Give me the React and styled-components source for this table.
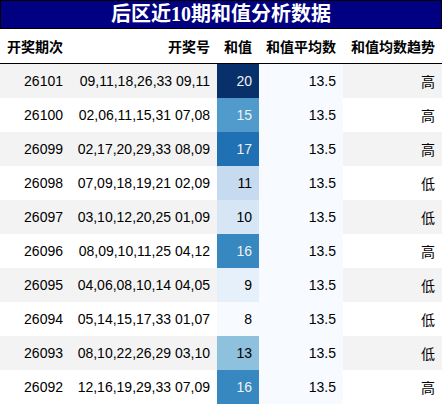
import styled, { createGlobalStyle } from "styled-components";

const rows = [
  ["26101", "09,11,18,26,33 09,11", 20, "高"],
  ["26100", "02,06,11,15,31 07,08", 15, "高"],
  ["26099", "02,17,20,29,33 08,09", 17, "高"],
  ["26098", "07,09,18,19,21 02,09", 11, "低"],
  ["26097", "03,10,12,20,25 01,09", 10, "低"],
  ["26096", "08,09,10,11,25 04,12", 16, "高"],
  ["26095", "04,06,08,10,14 04,05", 9, "低"],
  ["26094", "05,14,15,17,33 01,07", 8, "低"],
  ["26093", "08,10,22,26,29 03,10", 13, "低"],
  ["26092", "12,16,19,29,33 07,09", 16, "高"],
];

// Blues gradient, 8..20
const blues = {
  8: ["#f7fbff", "#000"],
  9: ["#e6f0fa", "#000"],
  10: ["#d6e6f4", "#000"],
  11: ["#c6dbef", "#000"],
  13: ["#8dc1dd", "#000"],
  15: ["#509bcb", "#f1f1f1"],
  16: ["#3787c0", "#f1f1f1"],
  17: ["#2070b4", "#f1f1f1"],
  20: ["#08306b", "#f1f1f1"],
};

export default function App() {
  return (
    <>
      <GlobalStyle />
      <Title>后区近10期和值分析数据</Title>
      <Table>
        <colgroup>
          <col style={{ width: 70 }} />
          <col style={{ width: 147 }} />
          <col style={{ width: 42 }} />
          <col style={{ width: 84 }} />
          <col style={{ width: 99 }} />
        </colgroup>
        <thead>
          <tr>
            <Th $left>开奖期次</Th>
            <Th>开奖号</Th>
            <Th>和值</Th>
            <Th>和值平均数</Th>
            <Th>和值均数趋势</Th>
          </tr>
        </thead>
        <tbody>
          {rows.map(([period, nums, sum, trend]) => (
            <Row key={period}>
              <Td>{period}</Td>
              <Td>{nums}</Td>
              <SumCell $bg={blues[sum][0]} $fg={blues[sum][1]}>
                {sum}
              </SumCell>
              <SumCell $bg="#f7fbff" $fg="#000">
                13.5
              </SumCell>
              <Td>{trend}</Td>
            </Row>
          ))}
        </tbody>
      </Table>
    </>
  );
}

const GlobalStyle = createGlobalStyle`
  body {
    margin: 0;
    background: #fff;
  }
`;

const Title = styled.div`
  box-sizing: border-box;
  width: 442px;
  height: 29px;
  line-height: 27px;
  background: #000080;
  color: #fff;
  border: 1px solid #000;
  font-family: "Liberation Serif", "Noto Sans CJK SC", serif;
  font-weight: bold;
  font-size: 20px;
  text-align: center;
`;

const Table = styled.table`
  width: 442px;
  table-layout: fixed;
  border-collapse: separate;
  border-spacing: 0;
  font-family: "Liberation Sans", "Noto Sans CJK SC", sans-serif;
  font-size: 14px;
  color: #000;
`;

const Th = styled.th`
  box-sizing: border-box;
  height: 35px;
  padding: 0 7px;
  text-align: ${(p) => (p.$left ? "left" : "right")};
  font-weight: bold;
  white-space: nowrap;
  border-bottom: 1px solid #000;
`;

const Row = styled.tr`
  background: #fff;

  &:nth-child(odd) {
    background: #f3f3f3;
  }
`;

const Td = styled.td`
  box-sizing: border-box;
  height: 34px;
  padding: 0 7px;
  text-align: right;
  white-space: nowrap;
`;

const SumCell = styled(Td)`
  background: ${(p) => p.$bg};
  color: ${(p) => p.$fg};
`;
